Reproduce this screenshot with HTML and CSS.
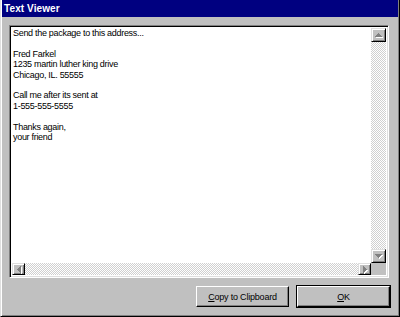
FILE: index.html
```html
<!DOCTYPE html>
<html lang="en">
<head>
    <meta charset="UTF-8">
    <title>Text Viewer</title>
    <link rel="stylesheet" href="styles.css">
</head>
<body>
    <div class="window">
        <div class="title-bar">Text Viewer</div>
        <div class="window-body">
            <div class="text-box">
                <div class="text-main">
                    <div class="text-content">Send the package to this address...

Fred Farkel
1235 martin luther king drive
Chicago, IL. 55555

Call me after its sent at
1-555-555-5555

Thanks again,
your friend</div>
                    <div class="vscroll">
                        <div class="scroll-btn"><svg width="7" height="4" viewBox="0 0 7 4"><path d="M3 0h1v1h1v1h1v1h1v1H0V3h1V2h1V1h1z" fill="#808080"/></svg></div>
                        <div class="track"></div>
                        <div class="scroll-btn"><svg width="7" height="4" viewBox="0 0 7 4"><path d="M0 0h7v1H6v1H5v1H4v1H3V3H2V2H1V1H0z" fill="#808080"/></svg></div>
                    </div>
                </div>
                <div class="hscroll">
                    <div class="scroll-btn"><svg width="4" height="7" viewBox="0 0 4 7"><path d="M3 0h1v7H3V6H2V5H1V4H0V3h1V2h1V1h1z" fill="#808080"/></svg></div>
                    <div class="track"></div>
                    <div class="scroll-btn"><svg width="4" height="7" viewBox="0 0 4 7"><path d="M0 0h1v1h1v1h1v1h1v1H3v1H2v1H1v1H0z" fill="#808080"/></svg></div>
                    <div class="corner"></div>
                </div>
            </div>
            <div class="button-row">
                <button type="button" class="btn"><u>C</u>opy to Clipboard</button>
                <button type="button" class="btn btn-default"><u>O</u>K</button>
            </div>
        </div>
    </div>
</body>
</html>
```

FILE: styles.css
```css
body {
    margin: 0;
    font-family: "Liberation Sans", Arial, sans-serif;
    font-size: 9px;
    color: #000;
    background: #c0c0c0;
}
.window {
    width: 400px;
    height: 317px;
    box-sizing: border-box;
    background: #c0c0c0;
    border-left: 1px solid #dfdfdf;
    border-right: 1px solid #000;
    border-bottom: 1px solid #000;
    box-shadow: inset 1px 0 0 #fff, inset -1px -1px 0 #808080;
    display: flex;
    flex-direction: column;
}
.title-bar {
    height: 17px;
    margin: 0 1px;
    background: #000080;
    color: #fff;
    font-weight: bold;
    font-size: 10px;
    line-height: 17px;
    padding-left: 2px;
    letter-spacing: 0.1px;
}
.window-body {
    padding: 8px 9px 0 8px;
    display: flex;
    flex-direction: column;
}
.text-box {
    height: 253px;
    box-sizing: border-box;
    border-top: 1px solid #808080;
    border-left: 1px solid #808080;
    border-right: 1px solid #fff;
    border-bottom: 1px solid #fff;
    box-shadow: inset 1px 1px 0 #000, inset -1px -1px 0 #dfdfdf;
    padding: 2px;
    display: flex;
    flex-direction: column;
    background: #fff;
    margin-right: 1px;
}
.text-main {
    flex: 1;
    display: flex;
    min-height: 0;
}
.text-content {
    flex: 1;
    white-space: pre;
    line-height: 10.4px;
    letter-spacing: -0.3px;
    padding-left: 1px;
}
.vscroll {
    width: 15px;
    display: flex;
    flex-direction: column;
}
.hscroll {
    height: 12px;
    display: flex;
}
.track {
    flex: 1;
    background-image: conic-gradient(#d0d0d0 25%, #fff 0 50%, #d0d0d0 0 75%, #fff 0);
    background-size: 2px 2px;
}
.scroll-btn {
    width: 15px;
    height: 14px;
    box-sizing: border-box;
    background: #c0c0c0;
    border-top: 1px solid #dfdfdf;
    border-left: 1px solid #dfdfdf;
    border-right: 1px solid #000;
    border-bottom: 1px solid #000;
    box-shadow: inset 1px 1px 0 #fff, inset -1px -1px 0 #808080;
    display: flex;
    align-items: center;
    justify-content: center;
}
.scroll-btn svg {
    filter: drop-shadow(1px 1px 0 #fff);
}
.hscroll .scroll-btn {
    width: 13px;
    height: 12px;
}
.corner {
    width: 15px;
    background: #c0c0c0;
}
.button-row {
    display: flex;
    justify-content: flex-end;
    gap: 8px;
    margin-top: 8px;
}
.btn {
    width: 93px;
    height: 21px;
    padding: 0;
    font-family: "Liberation Sans", Arial, sans-serif;
    font-size: 9px;
    letter-spacing: -0.2px;
    color: #000;
    background: #c0c0c0;
    border-top: 1px solid #fff;
    border-left: 1px solid #fff;
    border-right: 1px solid #000;
    border-bottom: 1px solid #000;
    box-shadow: inset -1px -1px 0 #808080;
}
.btn-default {
    outline: 1px solid #000;
}
```
